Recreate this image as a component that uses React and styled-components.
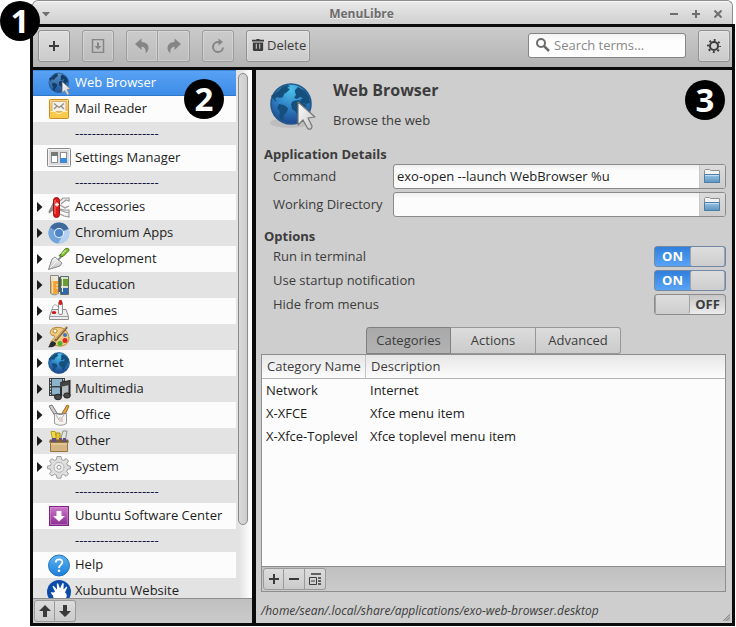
import React, { useState } from "react";
import styled, { createGlobalStyle, css } from "styled-components";

const GlobalStyle = createGlobalStyle`
  * { box-sizing: border-box; }
  body {
    margin: 0;
    background: #fff;
    color: #3c3c3c;
    font: 13px/20px "Open Sans", "Noto Sans", sans-serif;
  }
  button, input { font: inherit; color: inherit; margin: 0; }
  svg { display: block; flex: none; }
`;

const FRAME = "3px solid #0b0b0b";

const Window = styled.div`
  display: flex;
  flex-direction: column;
  height: 100vh;
  min-height: 480px;
  padding: 0 1px 1px 30px;
`;

const TitleBar = styled.header`
  display: flex;
  align-items: center;
  justify-content: space-between;
  height: 24px;
  margin: 0 2px;
  padding: 2px 6px 0 8px;
  border: 1px solid #8e8e8e;
  border-bottom: 0;
  border-radius: 6px 6px 0 0;
  background: linear-gradient(#eaeaea, #cfcfcf);
  box-shadow: inset 0 1px #f8f8f8;
`;

const Title = styled.h1`
  margin: 0 44px 0 0;
  font-size: 12px;
  line-height: 20px;
  font-weight: 700;
  color: #6c6c6c;
  text-shadow: 0 1px #f4f4f4;
`;

const TitleSide = styled.div`
  display: flex;
  flex: 1;
  gap: 6px;
  justify-content: ${(p) => (p.$end ? "flex-end" : "flex-start")};
`;

const WindowButton = styled.button`
  display: grid;
  place-items: center;
  width: ${(p) => (p.$narrow ? "10px" : "16px")};
  height: 16px;
  padding: 0;
  border: 0;
  background: none;
  color: #6f6f6f;
`;

const Toolbar = styled.div`
  display: flex;
  gap: 12px;
  padding: 3px 2px 5px 5px;
  border: ${FRAME};
  background: linear-gradient(#cbcbcb, #b3b3b3);
`;

const Spacer = styled.div`
  flex: 1;
`;

const Group = styled.div`
  display: flex;
  & > button:not(:first-child) {
    border-top-left-radius: 0;
    border-bottom-left-radius: 0;
    border-left: 0;
  }
  & > button:not(:last-child) {
    border-top-right-radius: 0;
    border-bottom-right-radius: 0;
  }
`;

const ToolButton = styled.button`
  display: flex;
  align-items: center;
  justify-content: center;
  gap: 3px;
  min-width: 32px;
  height: 32px;
  padding: ${(p) => (p.$wide ? "0 3px 2px 5px" : "0")};
  border: 1px solid #919191;
  border-radius: 3px;
  background: linear-gradient(#dedede, #cacaca);
  box-shadow: inset 0 0 0 1px rgba(255, 255, 255, 0.25);
  color: #3c3c3c;
  &:disabled {
    border-color: #9c9c9c;
    background: linear-gradient(#cbcbcb, #bcbcbc);
    color: #858585;
  }
`;

const SearchBox = styled.label`
  display: flex;
  align-items: center;
  gap: 4px;
  width: 158px;
  height: 25px;
  margin-top: 3px;
  padding: 0 6px 2px;
  border: 1px solid #858585;
  border-radius: 3px;
  background: linear-gradient(#f3f3f3, #fdfdfd 30%);
`;

const SearchInput = styled.input`
  flex: 1;
  min-width: 0;
  padding: 0;
  border: 0;
  outline: 0;
  background: none;
  &::placeholder { color: #888; opacity: 1; }
`;

const Panes = styled.div`
  display: flex;
  flex: 1;
  min-height: 0;
  border: ${FRAME};
  border-top: 0;
`;

const Sidebar = styled.aside`
  position: relative;
  display: flex;
  flex-direction: column;
  flex: none;
  width: 223px;
  border-right: 4px solid #0b0b0b;
`;

const ListArea = styled.div`
  display: flex;
  flex: 1;
  min-height: 0;
  overflow: hidden;
`;

const MenuList = styled.ul`
  flex: 1;
  margin: 0;
  padding: 0;
  list-style: none;
  overflow: hidden;
`;

const MenuItem = styled.li`
  background: #fcfcfc;
  &:nth-child(odd) { background: #e3e3e3; }
`;

const MenuButton = styled.button`
  display: grid;
  grid-template-columns: 10px 24px 1fr;
  column-gap: 4px;
  align-items: center;
  width: 100%;
  height: 26px;
  padding: 0;
  border: 0;
  background: none;
  color: #1c1c1c;
  text-align: left;
  white-space: nowrap;
  ${(p) =>
    p.$selected &&
    css`
      background: linear-gradient(#5aa3f5, #3b8be6);
      box-shadow: inset 0 1px #3f86d6, inset 0 -1px #2f78cc;
      color: #fff;
    `}
`;

const ItemText = styled.span`
  height: 22px;
`;

const Divider = styled.div`
  height: 23px;
  padding: 1px 0 0 42px;
  color: #14143c;
  overflow: hidden;
`;

const Trough = styled.div`
  width: 16px;
  padding: 3px 4px 0 2px;
  background: linear-gradient(90deg, #e3e3e3 20%, #fdfdfd 90%);
`;

const Thumb = styled.div`
  height: 86%;
  border: 1px solid #8b8b8b;
  border-radius: 5px;
  background: linear-gradient(90deg, #d9d9d9, #cdcdcd);
`;

const PaneBar = styled.div`
  display: flex;
  height: 25px;
  padding: 1px;
  border-top: 1px solid #8e8e8e;
  background: linear-gradient(#c0c0c0, #cbcbcb);
`;

const SmallButton = styled.button`
  display: grid;
  place-items: center;
  width: 21px;
  height: 22px;
  padding: 0;
  border: 1px solid #9a9a9a;
  border-radius: 3px;
  background: linear-gradient(#dcdcdc, #cbcbcb);
  color: #3a3a3a;
`;

const Main = styled.main`
  position: relative;
  display: flex;
  flex-direction: column;
  flex: 1;
  min-width: 0;
  padding: 0 6px 0 5px;
  background: #cecece;
`;

const AppHeader = styled.div`
  display: flex;
  gap: 17px;
  height: 75px;
  padding: 8px 0 0 7px;
`;

const AppIcon = styled.div`
  padding-top: 4px;
`;

const AppName = styled.h2`
  margin: 0 0 8px;
  font-size: 16px;
  line-height: 24px;
`;

const AppComment = styled.p`
  margin: 0;
`;

const SectionTitle = styled.h3`
  margin: ${(p) => (p.$spaced ? "10px" : "0")} 0 0 3px;
  font-size: 13px;
  line-height: 19px;
`;

const Rows = styled.div`
  display: flex;
  flex-direction: column;
  gap: 3px;
  padding-left: 12px;
`;

const Field = styled.div`
  display: grid;
  grid-template-columns: 120px 1fr;
  align-items: center;
`;

const FieldLabel = styled.label`
  padding-bottom: 2px;
`;

const Entry = styled.div`
  display: flex;
  height: 25px;
  border: 1px solid #8a8a8a;
  border-radius: 3px;
  background: linear-gradient(#f0f0f0, #fcfcfc 25%);
  overflow: hidden;
`;

const EntryInput = styled.input`
  flex: 1;
  min-width: 0;
  padding: 0 3px 2px;
  border: 0;
  outline: 0;
  background: none;
  color: #1c1c1c;
`;

const BrowseButton = styled.button`
  display: grid;
  place-items: center;
  width: 26px;
  padding: 0 2px 2px 0;
  border: 0;
  border-left: 1px solid #c8c8c8;
  background: linear-gradient(#dcdcdc, #cdcdcd);
`;

const SwitchRow = styled.label`
  display: flex;
  justify-content: space-between;
  height: 21px;
`;

const Switch = styled.span`
  display: flex;
  width: 72px;
  height: 21px;
  border: 1px solid ${(p) => (p.$on ? "#7288a4" : "#8c8c8c")};
  border-radius: 3px;
  background: ${(p) =>
    p.$on ? "linear-gradient(#2f80dc, #58a3f5)" : "linear-gradient(#c6c6c6, #ececec)"};
  color: ${(p) => (p.$on ? "#fff" : "#3c3c3c")};
  flex-direction: ${(p) => (p.$on ? "row" : "row-reverse")};
  font-weight: 700;
  line-height: 19px;
  overflow: hidden;
`;

const SwitchInput = styled.input`
  appearance: none;
  width: 35px;
  height: 19px;
  border: 1px solid #a2a2a2;
  border-width: 0 1px;
  border-radius: 2px;
  background: linear-gradient(#dedede, #cdcdcd);
  outline: 0;
`;

const SwitchText = styled.span`
  flex: 1;
  text-align: center;
`;

const Tabs = styled.div`
  display: flex;
  align-self: center;
  margin-top: 12px;
`;

const Tab = styled.button`
  width: 85px;
  height: 27px;
  padding: 0 0 2px;
  border: 1px solid #979797;
  border-left-width: ${(p) => (p.$first ? "1px" : "0")};
  border-radius: ${(p) => (p.$first ? "3px 0 0 0" : p.$last ? "0 3px 3px 0" : "0")};
  background: ${(p) =>
    p.$active ? "linear-gradient(#a9a9a9, #b3b3b3)" : "linear-gradient(#dcdcdc, #cbcbcb)"};
  border-color: ${(p) => (p.$active ? "#808080" : "#979797")};
`;

const TableBox = styled.section`
  display: flex;
  flex-direction: column;
  flex: 1;
  min-height: 0;
  border: 1px solid #8e8e8e;
  background: #fcfcfc;
`;

const TableArea = styled.div`
  flex: 1;
  min-height: 0;
  overflow: hidden;
`;

const Table = styled.table`
  width: 100%;
  border-collapse: separate;
  border-spacing: 0;
  table-layout: fixed;
  text-align: left;
`;

const HeadCell = styled.th`
  width: ${(p) => (p.$name ? "104px" : "auto")};
  height: 24px;
  padding: 0 0 2px 5px;
  border-bottom: 1px solid #b4b4b4;
  border-right: ${(p) => (p.$name ? "1px solid #c4c4c4" : "0")};
  background: linear-gradient(#e6e6e6, #fcfcfc);
  font-weight: 400;
  white-space: nowrap;
`;

const Cell = styled.td`
  height: 23px;
  padding: 0 0 2px 4px;
  color: #1c1c1c;
  white-space: nowrap;
`;

const Status = styled.footer`
  display: flex;
  align-items: center;
  justify-content: space-between;
  height: 31px;
  padding-top: 6px;
  margin-right: -4px;
  font-size: 12px;
  font-style: italic;
`;

const Grip = styled.span`
  align-self: flex-end;
  padding-bottom: 2px;
`;

const Marker = styled.span`
  position: absolute;
  top: ${(p) => p.$top};
  left: ${(p) => p.$left || "auto"};
  right: ${(p) => p.$right || "auto"};
  width: 40px;
  height: 40px;
  border-radius: 50%;
  background: #000;
  color: #fff;
  font: 700 33px/39px "Open Sans", "Noto Sans", sans-serif;
  text-align: center;
`;

const Ico = ({ size = 24, view = 24, children }) => (
  <svg width={size} height={size} viewBox={`0 0 ${view} ${view}`} fill="none" aria-hidden="true">
    {children}
  </svg>
);

const HiddenSvg = styled.svg`
  position: absolute;
`;

const Defs = () => (
  <HiddenSvg width="0" height="0" aria-hidden="true">
    <defs>
      <radialGradient id="earth" cx="50%" cy="15%" r="90%">
        <stop offset="0" stopColor="#4cc0e8" />
        <stop offset="0.5" stopColor="#2f7fc4" />
        <stop offset="1" stopColor="#1c3f86" />
      </radialGradient>
      <linearGradient id="darkEarth" x2="0" y2="1">
        <stop offset="0" stopColor="#5c92c4" />
        <stop offset="1" stopColor="#1f5498" />
      </linearGradient>
      <linearGradient id="cursor" x2="1" y2="1">
        <stop offset="0" stopColor="#fff" />
        <stop offset="1" stopColor="#c4c4c4" />
      </linearGradient>
      <linearGradient id="gold" x2="0" y2="1">
        <stop offset="0" stopColor="#fbd98a" />
        <stop offset="1" stopColor="#f0ae2c" />
      </linearGradient>
      <linearGradient id="folderBlue" x2="0" y2="1">
        <stop offset="0" stopColor="#9cc4e2" />
        <stop offset="1" stopColor="#5c94c2" />
      </linearGradient>
      <linearGradient id="purple" x2="0" y2="1">
        <stop offset="0" stopColor="#cf7acb" />
        <stop offset="1" stopColor="#8a2c92" />
      </linearGradient>
      <linearGradient id="helpBlue" x2="0" y2="1">
        <stop offset="0" stopColor="#5cb4f0" />
        <stop offset="1" stopColor="#1c7edc" />
      </linearGradient>
      <linearGradient id="silver" x2="0" y2="1">
        <stop offset="0" stopColor="#fafafa" />
        <stop offset="1" stopColor="#bdbdbd" />
      </linearGradient>
    </defs>
  </HiddenSvg>
);

const Continents = ({ color }) => (
  <g fill={color}>
    <path d="M7 9l5-5 5-2 3 1-3 2 3 1-3 3-3 2-1 3-3 1-3-1-2 2 2 3-2-1-3-4-1-1z" />
    <path d="M9 21l5 1 4 3-1 4-3 3-1 5-2 1-2-5 1-4-3-4z" />
    <path d="M25 7l3-3 7 4 4 6 1 6-4 1-4-1-2-3 3-2-3-1-3 2-3-1 2-3-1-3z" />
    <path d="M23 18l6-1 5 4 3 1-4 6-2 6-3 1-2-6-4-3-1-5z" />
  </g>
);

const Earth = ({ dark }) => (
  <>
    <circle cx="21" cy="21" r="20" fill={dark ? "url(#darkEarth)" : "url(#earth)"} stroke="#24588c" strokeWidth="1.6" />
    <Continents color={dark ? "#123c6c" : "#15507c"} />
  </>
);

const CursorShape = () => (
  <path d="M28 19v23l5-5 5 9q4 1 4-3l-4-8 7-1z" fill="url(#cursor)" stroke="#777" strokeWidth="1.2" strokeLinejoin="round" />
);

const icons = {
  browser: (
    <Ico view={49}>
      <g transform="translate(3 3)">
        <Earth dark />
        <CursorShape />
      </g>
    </Ico>
  ),
  mail: (
    <Ico>
      <rect x="2.5" y="2.5" width="19" height="19" rx="1" fill="url(#gold)" stroke="#d08c1c" />
      <rect x="5" y="4.5" width="14" height="10" fill="#f6f1e6" stroke="#cfae70" />
      <path d="M7 6.5l5 4 5-4M7 12l3-3M17 12l-3-3" stroke="#8c8c8c" strokeWidth="1.2" />
      <path d="M3 14h5l2 2h4l2-2h5v7H3z" fill="#fbc94c" />
      <path d="M3.5 14.5h5l1.500 2h4l1.500-2h5" stroke="#fff0b8" />
    </Ico>
  ),
  settings: (
    <Ico>
      <rect x="0.5" y="2.5" width="23" height="18" rx="1" fill="#dadada" stroke="#8a8a8a" />
      <rect x="1.5" y="3.5" width="21" height="16" stroke="#f4f4f4" />
      <rect x="4.5" y="6.5" width="6" height="10" fill="#fff" stroke="#8e8e8e" />
      <rect x="4" y="6" width="7" height="4" fill="#777" />
      <rect x="13.5" y="6.5" width="6" height="10" fill="#fff" stroke="#8e8e8e" />
      <rect x="13" y="12" width="7" height="5" fill="#3d8ad8" />
    </Ico>
  ),
  accessories: (
    <Ico>
      <path d="M7 7L2 17M7 11l-5 7 5-4" stroke="#8c8c8c" strokeWidth="1.5" />
      <path d="M13 6l3-3h6v3l-3-1-5 4M13 10l5 3 4-2M13 14l4 1h5v3l-4-1-5-2M13 19l4 2 5 1v-3" stroke="#9a9a9a" strokeWidth="1.2" fill="#f1f1f1" />
      <rect x="6.5" y="2.5" width="6" height="20" rx="3" fill="#dd1c1c" stroke="#9c1010" />
      <path d="M8 5v14" stroke="#f77" />
      <path d="M10 7.5v4M8 9.500h4" stroke="#fff" strokeWidth="1.3" />
    </Ico>
  ),
  chromium: (
    <Ico>
      <circle cx="12" cy="12" r="10.5" fill="#8ab6e4" />
      <path d="M12 12L3 6.500A10.500 10.500 0 0 1 21.600 8z" fill="#40699c" />
      <path d="M12 12l9.600-4A10.500 10.500 0 0 1 11 22.500z" fill="#b4d2f0" />
      <path d="M12 12L3 6.500A10.500 10.500 0 0 0 11 22.500l3-5z" fill="#73a5da" />
      <circle cx="12" cy="12" r="5" fill="#e8f2fc" />
      <circle cx="12" cy="12" r="4" fill="#4d85c8" />
    </Ico>
  ),
  development: (
    <Ico>
      <path d="M1.500 22.500L5 12l3-2 7 6-2 3z" fill="url(#silver)" stroke="#8a8a8a" />
      <path d="M3 21l8-8" stroke="#f6f6f6" />
      <path d="M11 13l3-3-2-2" stroke="#777" strokeWidth="1.5" />
      <path d="M13 8l5-6q4-2 4 1.500l-6 6q-3 1-3-1.500z" fill="#7cb82c" stroke="#4c7c14" />
      <path d="M15 7l4-4" stroke="#c4e888" strokeWidth="1.4" />
    </Ico>
  ),
  education: (
    <Ico>
      <path d="M3.500 2.500h8v18q-4 3-8 0z" fill="#e8e8e2" stroke="#8a8a84" />
      <path d="M4 8h7v12q-3.500 2-7 0z" fill="#f0a234" />
      <path d="M5.500 4v16" stroke="#fbd9a0" strokeWidth="1.5" />
      <path d="M13.500 3.500h8v18h-8z" fill="#d7dfd4" stroke="#5e6e60" />
      <path d="M14 6h7v7h-7z" fill="#6a9c34" />
      <path d="M14 15h7v6h-7z" fill="#2f68a8" />
      <path d="M12.500 4v15" stroke="#555" strokeWidth="2" />
      <path d="M15.500 4v15M9 12h2M9 15h2" stroke="#e5eed8" />
    </Ico>
  ),
  games: (
    <Ico>
      <path d="M4 14L6 7q3-3 5 1" stroke="#aaa" />
      <path d="M2.500 20.500v-3L5 10.500h14l2.500 7v3z" fill="#ececec" stroke="#8d8d8d" />
      <path d="M3 17.500h18" stroke="#9f9f9f" />
      <rect x="11.5" y="2.5" width="4" height="13" rx="1.5" fill="#f5f5f5" stroke="#8e8e8e" />
      <rect x="12" y="1" width="3" height="5" rx="1" fill="#d81c1c" />
      <ellipse cx="7" cy="13.5" rx="2.3" ry="1.5" fill="#cc1616" />
    </Ico>
  ),
  graphics: (
    <Ico>
      <path d="M9 2.500C2 3 2 10 6 10.500c4 0 0 4-2 6 3 6 16 7 18-2 0-8-5-13-13-12z" fill="#f0cc82" stroke="#b98530" />
      <circle cx="8" cy="6" r="2" fill="#fff" stroke="#b98530" />
      <circle cx="18" cy="10" r="2" fill="#3c76c8" />
      <circle cx="18" cy="15.5" r="2.5" fill="#dc2828" />
      <circle cx="13" cy="18.5" r="2.5" fill="#54b02c" />
      <path d="M20 2L8 16" stroke="#86643a" strokeWidth="2.5" />
      <path d="M19 2L9 14" stroke="#d6b478" />
      <path d="M1 22c2-1 1-5 5-6l3 2c0 4-5 5-8 4z" fill="#2c2c2c" />
    </Ico>
  ),
  internet: (
    <Ico view={46}>
      <g transform="translate(2 2)">
        <Earth />
      </g>
    </Ico>
  ),
  multimedia: (
    <Ico>
      <rect x="2" y="1" width="16" height="18" fill="#3c4144" />
      <path d="M5 2h10v7H5zM5 10.500h10v7H5z" fill="#8cb2cc" />
      <path d="M3.500 2v16M16.500 2v16" stroke="#d7dcde" strokeDasharray="1.5 1.5" />
      <path d="M14 19V6l8.500-2v14" fill="#b4bcc0" stroke="#2c2c2c" strokeWidth="2" />
      <path d="M13 6l9.500-2v4L13 10z" fill="#444" />
      <ellipse cx="11" cy="20" rx="3.5" ry="2.8" fill="#4a4a4a" stroke="#222" />
      <ellipse cx="20" cy="18.5" rx="3.3" ry="2.6" fill="#4a4a4a" stroke="#222" />
    </Ico>
  ),
  office: (
    <Ico>
      <path d="M2 3l3-1 5 8-2 3z" fill="#cfcfcf" stroke="#777" />
      <path d="M20 2l2 1-5 11-3-2z" fill="#e6a442" stroke="#9c6c24" />
      <path d="M7.500 10.500h12v10q-6 3.500-12 0z" fill="#f4f4f4" stroke="#9a9a9a" />
      <path d="M8 10.500q5.500 2 11 0" stroke="#777" />
      <path d="M9 12l3 5M17 12l-3 4" stroke="#b0b0b0" />
      <rect x="12" y="14" width="4" height="5" fill="#dfcfcf" />
    </Ico>
  ),
  other: (
    <Ico>
      <path d="M4 2.500h4l3 10H6z" fill="#f2da4a" stroke="#b89c1c" />
      <path d="M13 12l3-10h4l-2 11z" fill="#dfe6dc" stroke="#8c9488" />
      <path d="M9 4h4v8H9z" fill="#e8c838" stroke="#a88c18" />
      <path d="M12 9h3v4h-3z" fill="#6a4a9c" />
      <path d="M3 10.500h18l1 3H2z" fill="#7a5e38" />
      <path d="M5 9h4v4H5zM16 9h3v4h-3z" fill="#5f4d8c" />
      <path d="M3.500 13.500h17v9h-17z" fill="#d4b583" stroke="#987440" />
      <path d="M4 15h16" stroke="#ecd8b0" />
    </Ico>
  ),
  system: (
    <Ico>
      <path
        d="M10 1.500h4l.6 3 2 .8L19.200 3.600 21.500 6l-1.700 2.600.8 2 2.900.6v2.500l-3 .6-.8 2 1.800 2.600-2.400 2.400-2.500-1.800-2 .8-.6 2.800h-4l-.6-3-2-.8-2.600 1.700L2.500 18.700l1.700-2.500-.8-2-2.900-.6v-2.500l3-.6.8-2L2.500 6l2.300-2.400 2.600 1.800 2-.8z"
        fill="#dedede"
        stroke="#9c9c9c"
      />
      <circle cx="12" cy="12.3" r="5" fill="#eee" stroke="#b4b4b4" />
      <circle cx="12" cy="12.3" r="2" fill="#fff" stroke="#999" />
    </Ico>
  ),
  software: (
    <Ico>
      <rect x="2.5" y="2.5" width="19" height="19" fill="url(#purple)" stroke="#7c2484" />
      <rect x="3.5" y="3.5" width="17" height="17" stroke="#dc9cdc" strokeOpacity=".5" />
      <path d="M9.500 7h5v5H18l-6 5.500L6 12h3.500z" fill="#fff" />
    </Ico>
  ),
  help: (
    <Ico>
      <circle cx="12" cy="12.5" r="10.5" fill="url(#helpBlue)" stroke="#2272bc" />
      <path d="M8.800 9.500c0-4.500 7-4 6.500 0-.2 2.500-3.300 2.400-3.300 5.500" stroke="#fff" strokeWidth="1.8" />
      <circle cx="12" cy="17.8" r="1.3" fill="#fff" />
    </Ico>
  ),
  xubuntu: (
    <Ico>
      <circle cx="12" cy="13" r="12" fill="#0c4ca8" />
      <path d="M4 13q3 1 4-.5L5.500 7.500l1-.8L10 10.500 9.800 4.500h1.400l1.800 5L15.500 4l1.200.4-.2 6 3-3 .8.8-2.300 5.300q3 2 1 5.500-4 4-9 3-4-2-4-5.500-2-1.500-2-3.500z" fill="#fff" />
    </Ico>
  ),
};

const ENTRIES = [
  { label: "Web Browser", icon: "browser" },
  { label: "Mail Reader", icon: "mail" },
  null,
  { label: "Settings Manager", icon: "settings" },
  null,
  { label: "Accessories", icon: "accessories", open: true },
  { label: "Chromium Apps", icon: "chromium", open: true },
  { label: "Development", icon: "development", open: true },
  { label: "Education", icon: "education", open: true },
  { label: "Games", icon: "games", open: true },
  { label: "Graphics", icon: "graphics", open: true },
  { label: "Internet", icon: "internet", open: true },
  { label: "Multimedia", icon: "multimedia", open: true },
  { label: "Office", icon: "office", open: true },
  { label: "Other", icon: "other", open: true },
  { label: "System", icon: "system", open: true },
  null,
  { label: "Ubuntu Software Center", icon: "software" },
  null,
  { label: "Help", icon: "help" },
  { label: "Xubuntu Website", icon: "xubuntu" },
];

const CATEGORIES = [
  ["Network", "Internet"],
  ["X-XFCE", "Xfce menu item"],
  ["X-Xfce-Toplevel", "Xfce toplevel menu item"],
];

const Expander = () => (
  <svg width="10" height="10" viewBox="0 0 10 10" aria-hidden="true">
    <path d="M4 0L9.500 5 4 10z" fill="#1c1c1c" />
  </svg>
);

const Plus = () => (
  <Ico size={12} view={12}>
    <path d="M6 1v10M1 6h10" stroke="currentColor" strokeWidth="2" />
  </Ico>
);

const FolderIcon = () => (
  <Ico size={16} view={16}>
    <path d="M.5 14.500V2.500l1-1h4l1 1h9v12z" fill="#f4f4f4" stroke="#8f8f8f" />
    <path d="M.5 6.500h15v8H.5z" fill="url(#folderBlue)" stroke="#4f7ca4" />
    <path d="M1 7.500h14" stroke="#c0dcf0" />
  </Ico>
);

const UndoIcon = ({ flip }) => (
  <Ico size={16} view={16}>
    <path
      transform={flip ? "translate(16 0) scale(-1 1)" : undefined}
      d="M1 6L7.500.5V4q7 0 7 6.500 0 3-3 5 1-6.500-4-7V12z"
      fill="currentColor"
    />
  </Ico>
);

function PathField({ id, label, value, onChange }) {
  return (
    <Field>
      <FieldLabel htmlFor={id}>{label}</FieldLabel>
      <Entry>
        <EntryInput id={id} value={value} onChange={(e) => onChange(e.target.value)} />
        <BrowseButton aria-label={`Browse for ${label}`}>
          <FolderIcon />
        </BrowseButton>
      </Entry>
    </Field>
  );
}

function Option({ label, initial }) {
  const [on, setOn] = useState(initial);
  return (
    <SwitchRow>
      {label}
      <Switch $on={on}>
        <SwitchText aria-hidden="true">{on ? "ON" : "OFF"}</SwitchText>
        <SwitchInput type="checkbox" role="switch" aria-label={label} checked={on} onChange={() => setOn(!on)} />
      </Switch>
    </SwitchRow>
  );
}

export default function App() {
  const [selected, setSelected] = useState("Web Browser");
  const [command, setCommand] = useState("exo-open --launch WebBrowser %u");
  const [directory, setDirectory] = useState("");
  const [tab, setTab] = useState("Categories");

  return (
    <>
      <GlobalStyle />
      <Defs />
      <Window>
        <TitleBar>
          <TitleSide>
            <WindowButton $narrow aria-label="Window menu">
              <Ico size={8} view={8}>
                <path d="M0 2h8L4 6.500z" fill="currentColor" />
              </Ico>
            </WindowButton>
          </TitleSide>
          <Title>MenuLibre</Title>
          <TitleSide $end>
            <WindowButton aria-label="Minimize">
              <Ico size={8} view={8}><path d="M0 4h8" stroke="currentColor" strokeWidth="2" /></Ico>
            </WindowButton>
            <WindowButton aria-label="Maximize">
              <Ico size={8} view={8}><path d="M0 4h8M4 0v8" stroke="currentColor" strokeWidth="2" /></Ico>
            </WindowButton>
            <WindowButton aria-label="Close">
              <Ico size={8} view={8}><path d="M.5.5l7 7M7.500.5l-7 7" stroke="currentColor" strokeWidth="2" /></Ico>
            </WindowButton>
          </TitleSide>
        </TitleBar>

        <Toolbar>
          <ToolButton aria-label="Add"><Plus /></ToolButton>
          <ToolButton aria-label="Save" disabled>
            <Ico size={14} view={14}>
              <path d="M1.500.5h11v13h-11z" stroke="currentColor" strokeWidth="1.5" />
              <path d="M6 3.500h2V7h2.500L7 10.500 3.500 7H6z" fill="currentColor" />
            </Ico>
          </ToolButton>
          <Group>
            <ToolButton aria-label="Undo" disabled><UndoIcon /></ToolButton>
            <ToolButton aria-label="Redo" disabled><UndoIcon flip /></ToolButton>
          </Group>
          <ToolButton aria-label="Revert" disabled>
            <Ico size={16} view={16}>
              <path d="M9.500 4H8a5 5 0 1 0 5 5.500" stroke="currentColor" strokeWidth="2" />
              <path d="M8.500.5L13 4 8.500 7.500z" fill="currentColor" />
            </Ico>
          </ToolButton>
          <ToolButton $wide>
            <Ico size={12} view={14}>
              <path d="M5 0h4v1h5v2H0V1h5zM1 4h12v9l-1 1H2l-1-1z" fill="currentColor" />
              <path d="M5 5.500v6M9 5.500v6" stroke="#d0d0d0" strokeWidth="1.2" />
            </Ico>
            Delete
          </ToolButton>
          <Spacer />
          <SearchBox>
            <Ico size={15} view={15}>
              <circle cx="6" cy="6" r="4" stroke="#6c6c6c" strokeWidth="2" />
              <path d="M9 9l5 5" stroke="#6c6c6c" strokeWidth="2.5" />
            </Ico>
            <SearchInput type="text" aria-label="Search" placeholder="Search terms..." />
          </SearchBox>
          <ToolButton aria-label="Settings">
            <Ico size={14} view={14}>
              <circle cx="7" cy="7" r="4" stroke="currentColor" strokeWidth="2" />
              <circle cx="7" cy="7" r="6" stroke="currentColor" strokeWidth="2" strokeDasharray="1.9 2.81" strokeDashoffset="0.95" />
            </Ico>
          </ToolButton>
        </Toolbar>

        <Panes>
          <Sidebar>
            <ListArea>
              <MenuList>
                {ENTRIES.map((entry, i) => (
                  <MenuItem key={i}>
                    {entry ? (
                      <MenuButton $selected={selected === entry.label} onClick={() => setSelected(entry.label)}>
                        {entry.open ? <Expander /> : <span />}
                        {icons[entry.icon]}
                        <ItemText>{entry.label}</ItemText>
                      </MenuButton>
                    ) : (
                      <Divider>--------------------</Divider>
                    )}
                  </MenuItem>
                ))}
              </MenuList>
              <Trough><Thumb /></Trough>
            </ListArea>
            <PaneBar>
              <Group>
                <SmallButton aria-label="Move up">
                  <Ico size={14} view={14}><path d="M7 1l6 6H9v6H5V7H1z" fill="currentColor" /></Ico>
                </SmallButton>
                <SmallButton aria-label="Move down">
                  <Ico size={14} view={14}><path d="M7 13L1 7h4V1h4v6h4z" fill="currentColor" /></Ico>
                </SmallButton>
              </Group>
            </PaneBar>
            <Marker $top="9px" $right="28px">2</Marker>
          </Sidebar>

          <Main>
            <AppHeader>
              <AppIcon>
                <Ico size={48} view={48}>
                  <ellipse cx="22" cy="41" rx="20" ry="5" fill="#000" opacity=".08" />
                  <g transform="translate(2 1)">
                    <Earth />
                    <CursorShape />
                  </g>
                </Ico>
              </AppIcon>
              <div>
                <AppName>Web Browser</AppName>
                <AppComment>Browse the web</AppComment>
              </div>
            </AppHeader>

            <SectionTitle>Application Details</SectionTitle>
            <Rows>
              <PathField id="command" label="Command" value={command} onChange={setCommand} />
              <PathField id="directory" label="Working Directory" value={directory} onChange={setDirectory} />
            </Rows>

            <SectionTitle $spaced>Options</SectionTitle>
            <Rows>
              <Option label="Run in terminal" initial />
              <Option label="Use startup notification" initial />
              <Option label="Hide from menus" initial={false} />
            </Rows>

            <Tabs role="tablist">
              {["Categories", "Actions", "Advanced"].map((name, i) => (
                <Tab
                  key={name}
                  role="tab"
                  aria-selected={tab === name}
                  $active={tab === name}
                  $first={i === 0}
                  $last={i === 2}
                  onClick={() => setTab(name)}
                >
                  {name}
                </Tab>
              ))}
            </Tabs>
            <TableBox>
              <TableArea>
                <Table>
                  <thead>
                    <tr>
                      <HeadCell $name>Category Name</HeadCell>
                      <HeadCell>Description</HeadCell>
                    </tr>
                  </thead>
                  <tbody>
                    {CATEGORIES.map(([name, description]) => (
                      <tr key={name}>
                        <Cell>{name}</Cell>
                        <Cell>{description}</Cell>
                      </tr>
                    ))}
                  </tbody>
                </Table>
              </TableArea>
              <PaneBar>
                <Group>
                  <SmallButton aria-label="Add category"><Plus /></SmallButton>
                  <SmallButton aria-label="Remove category">
                    <Ico size={12} view={12}><path d="M1 6h10" stroke="currentColor" strokeWidth="2" /></Ico>
                  </SmallButton>
                  <SmallButton aria-label="Clear categories">
                    <Ico size={12} view={12}>
                      <path d="M2 1h10M9 5h3M9 8h3M9 11h3" stroke="currentColor" strokeWidth="1.5" />
                      <path d="M.5 4.500h7v7h-7zM2 8h4" stroke="currentColor" />
                    </Ico>
                  </SmallButton>
                </Group>
              </PaneBar>
            </TableBox>
            <Status>
              /home/sean/.local/share/applications/exo-web-browser.desktop
              <Grip>
                <Ico size={7} view={7}>
                  <path d="M7 0v7H0z" fill="#b0b0b0" />
                  <path d="M7 0L0 7M7 3L3 7" stroke="#8c8c8c" />
                </Ico>
              </Grip>
            </Status>
            <Marker $top="10px" $right="7px">3</Marker>
          </Main>
        </Panes>
      </Window>
      <Marker $top="1px" $left="0">1</Marker>
    </>
  );
}
